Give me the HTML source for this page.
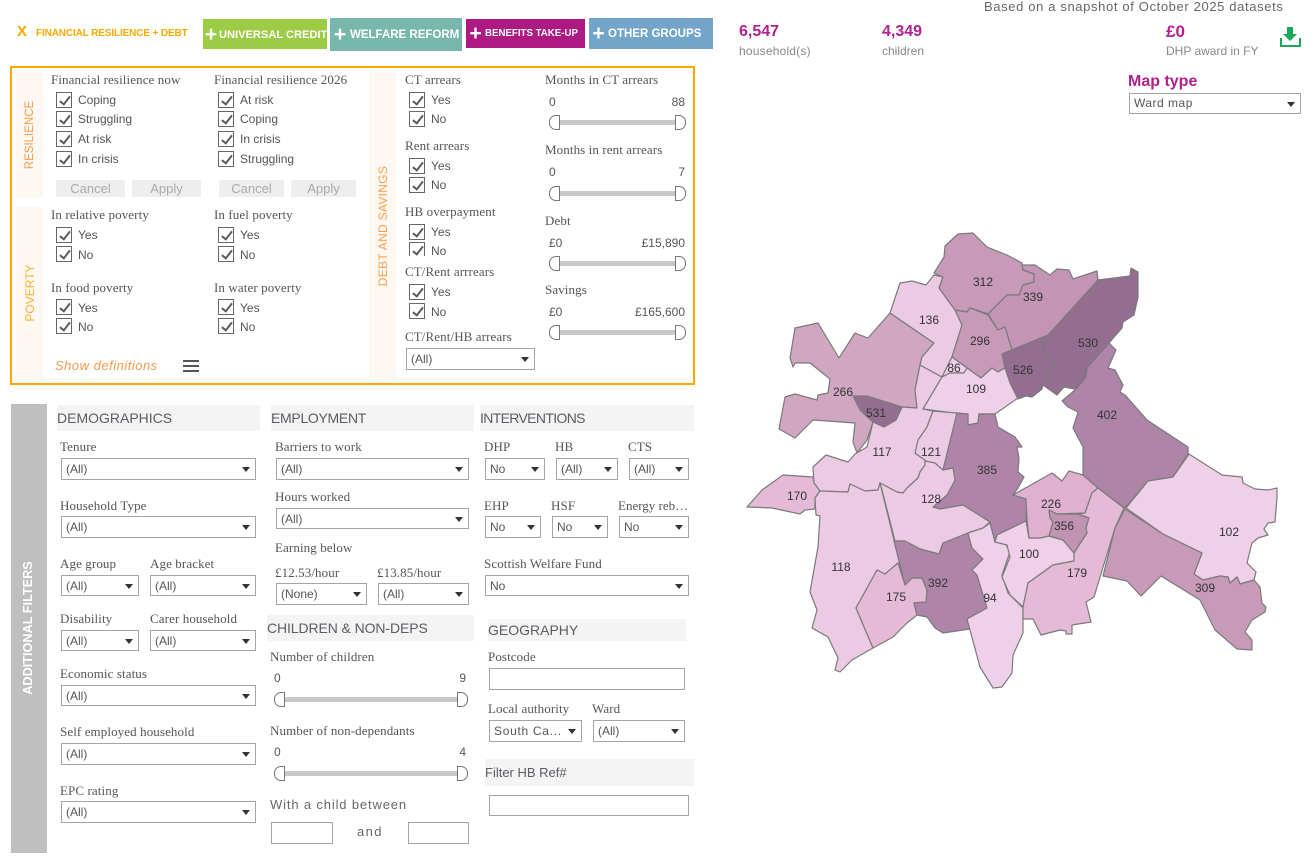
<!DOCTYPE html>
<html><head><meta charset="utf-8"><title>Dashboard</title>
<style>
html,body{margin:0;padding:0;background:#fff}
body{width:1315px;height:860px;position:relative;overflow:hidden;font-family:"Liberation Sans",sans-serif;color:#555;font-size:12px}
div,i,b{position:absolute;box-sizing:border-box;display:block;font-style:normal}
.t{white-space:nowrap;line-height:14px;font-size:12px;color:#555}
.l{white-space:nowrap;line-height:14px;font-family:"Liberation Serif",serif;font-size:13px;color:#555;letter-spacing:.1px}
.r{transform:translateX(-100%)}
.c{width:16px;height:16px;border:1px solid #666;background:#fff}
.c:after{content:"";position:absolute;left:5px;top:1px;width:4px;height:9px;border:solid #5a5a5a;border-width:0 2px 2px 0;transform:rotate(38deg)}
.s{height:22px;border:1px solid #a5a5a5;background:#fff;font-size:12px;line-height:20px;padding-left:4px;color:#555;white-space:nowrap;overflow:hidden}
.s:after{content:"";position:absolute;right:5px;top:8px;border:4px solid transparent;border-top:5px solid #333;border-bottom:0}
.n{height:22px;border:1px solid #a5a5a5;background:#fff}
.sl{height:15px;background:linear-gradient(#c8c8c8,#c8c8c8) center/100% 5px no-repeat}
.sl:before,.sl:after{content:"";position:absolute;top:0;width:11px;height:15px;border:1px solid #777;background:#fff;box-sizing:border-box}
.sl:before{left:0;border-radius:7px 0 0 7px}
.sl:after{right:0;border-radius:0 7px 7px 0}
.h{height:26px;background:#f4f4f4}
.g{font-size:14px;line-height:16px;white-space:nowrap;color:#5f5a64}
.btn{background:#eee;color:#aaa;height:17px;line-height:17px;text-align:center;font-size:13px;top:180px}
.tab{color:#fff;font-weight:bold;white-space:nowrap;display:flex;align-items:center}
.tab span{font-size:21px;line-height:20px;flex:none;text-align:center}
.st{background:#fdf8f2}
.v{white-space:nowrap;transform:translate(-50%,-50%) rotate(-90deg);line-height:14px}
svg{position:absolute;left:0;top:0}
polygon{stroke:#7a7a7a;stroke-width:1.2;stroke-linejoin:round}
svg text{font-family:"Liberation Sans",sans-serif;font-size:12px;fill:#333;text-anchor:middle}
</style></head><body>

<div style="left:17px;top:24px;font-size:15px;line-height:16px;font-weight:bold;color:#f9a800">X</div>
<div style="left:36px;top:27px;font-size:10px;line-height:14px;font-weight:bold;color:#f9a800;white-space:nowrap;letter-spacing:-.13px">FINANCIAL RESILIENCE + DEBT</div>
<div class="tab" style="left:203px;top:19px;width:124px;height:30px;background:#9ccb45;font-size:11.1px;padding-top:1px"><span style="width:16px">+</span>UNIVERSAL CREDIT</div>
<div class="tab" style="left:330px;top:18px;width:132px;height:33px;background:#78b7ac;font-size:11.5px"><span style="width:20px">+</span>WELFARE REFORM</div>
<div class="tab" style="left:466px;top:19px;width:119px;height:29px;background:#ae1a84;font-size:9.7px"><span style="width:19px">+</span>BENEFITS TAKE-UP</div>
<div class="tab" style="left:589px;top:18px;width:124px;height:31px;background:#72a5c9;font-size:11.5px"><span style="width:19px">+</span>OTHER GROUPS</div>

<div class="t" style="left:984px;top:0;font-size:13px;letter-spacing:.63px;color:#666">Based on a snapshot of October 2025 datasets</div>
<div class="t" style="left:739px;top:23px;font-size:16px;line-height:17px;font-weight:bold;color:#b3208f">6,547</div>
<div class="t" style="left:739px;top:44px;color:#888;letter-spacing:.2px">household(s)</div>
<div class="t" style="left:882px;top:23px;font-size:16px;line-height:17px;font-weight:bold;color:#b3208f">4,349</div>
<div class="t" style="left:882px;top:44px;color:#888">children</div>
<div class="t" style="left:1166px;top:23px;font-size:17px;line-height:17px;font-weight:bold;color:#b3208f">£0</div>
<div class="t" style="left:1166px;top:44px;color:#888">DHP award in FY</div>
<svg style="left:1279px;top:26px" width="23" height="22" viewBox="0 0 23 22"><path d="M8 1h6v7h4l-7 7-7-7h4z" fill="#1aa85a"/><path d="M2 12v8h19v-8" fill="none" stroke="#1aa85a" stroke-width="2"/></svg>
<div class="t" style="left:1128px;top:73px;font-size:16px;line-height:18px;font-weight:bold;color:#b01f8c">Map type</div>
<div class="s" style="left:1129px;top:93px;width:172px;height:21px;line-height:19px;letter-spacing:.5px">Ward map</div>

<!-- orange panel -->
<div style="left:10px;top:66px;width:685px;height:319px;border:2px solid #f9a800"></div>
<div class="st" style="left:16px;top:72px;width:27px;height:126px"></div>
<div class="st" style="left:16px;top:207px;width:27px;height:172px"></div>
<div class="st" style="left:369px;top:72px;width:27px;height:307px"></div>
<div class="t v" style="left:30px;top:135px;color:#f79a4a;font-size:11.5px">RESILIENCE</div>
<div class="t v" style="left:30px;top:293px;color:#f9b233">POVERTY</div>
<div class="t v" style="left:383px;top:226px;color:#f7a04f;letter-spacing:.3px">DEBT AND SAVINGS</div>

<div class="l" style="left:51px;top:73px">Financial resilience now</div>
<i class="c" style="left:56px;top:92px"></i><div class="t" style="left:78px;top:93px">Coping</div>
<i class="c" style="left:56px;top:111px"></i><div class="t" style="left:78px;top:112px">Struggling</div>
<i class="c" style="left:56px;top:131px"></i><div class="t" style="left:78px;top:132px">At risk</div>
<i class="c" style="left:56px;top:151px"></i><div class="t" style="left:78px;top:152px">In crisis</div>
<div class="l" style="left:214px;top:73px">Financial resilience 2026</div>
<i class="c" style="left:218px;top:92px"></i><div class="t" style="left:240px;top:93px">At risk</div>
<i class="c" style="left:218px;top:111px"></i><div class="t" style="left:240px;top:112px">Coping</div>
<i class="c" style="left:218px;top:131px"></i><div class="t" style="left:240px;top:132px">In crisis</div>
<i class="c" style="left:218px;top:151px"></i><div class="t" style="left:240px;top:152px">Struggling</div>
<div class="btn" style="left:56px;width:69px">Cancel</div>
<div class="btn" style="left:132px;width:69px">Apply</div>
<div class="btn" style="left:219px;width:65px">Cancel</div>
<div class="btn" style="left:291px;width:65px">Apply</div>

<div class="l" style="left:51px;top:208px">In relative poverty</div>
<i class="c" style="left:56px;top:227px"></i><div class="t" style="left:78px;top:228px">Yes</div>
<i class="c" style="left:56px;top:246px"></i><div class="t" style="left:78px;top:248px">No</div>
<div class="l" style="left:214px;top:208px">In fuel poverty</div>
<i class="c" style="left:218px;top:227px"></i><div class="t" style="left:240px;top:228px">Yes</div>
<i class="c" style="left:218px;top:246px"></i><div class="t" style="left:240px;top:248px">No</div>
<div class="l" style="left:51px;top:281px">In food poverty</div>
<i class="c" style="left:56px;top:299px"></i><div class="t" style="left:78px;top:301px">Yes</div>
<i class="c" style="left:56px;top:318px"></i><div class="t" style="left:78px;top:320px">No</div>
<div class="l" style="left:214px;top:281px">In water poverty</div>
<i class="c" style="left:218px;top:299px"></i><div class="t" style="left:240px;top:301px">Yes</div>
<i class="c" style="left:218px;top:318px"></i><div class="t" style="left:240px;top:320px">No</div>
<div class="t" style="left:55px;top:359px;font-size:13px;font-style:italic;color:#f79a4a;letter-spacing:.5px">Show definitions</div>
<div style="left:183px;top:360px;width:16px;height:2px;background:#555"></div>
<div style="left:183px;top:365px;width:16px;height:2px;background:#555"></div>
<div style="left:183px;top:370px;width:16px;height:2px;background:#555"></div>

<div class="l" style="left:405px;top:73px">CT arrears</div>
<i class="c" style="left:409px;top:92px"></i><div class="t" style="left:431px;top:93px">Yes</div>
<i class="c" style="left:409px;top:111px"></i><div class="t" style="left:431px;top:112px">No</div>
<div class="l" style="left:405px;top:139px">Rent arrears</div>
<i class="c" style="left:409px;top:158px"></i><div class="t" style="left:431px;top:159px">Yes</div>
<i class="c" style="left:409px;top:177px"></i><div class="t" style="left:431px;top:178px">No</div>
<div class="l" style="left:405px;top:205px">HB overpayment</div>
<i class="c" style="left:409px;top:224px"></i><div class="t" style="left:431px;top:225px">Yes</div>
<div style="left:405px;top:242px;width:60px;height:14px;overflow:hidden"><i class="c" style="left:4px;top:0"></i><div class="t" style="left:26px;top:2px">No</div></div>
<div class="l" style="left:405px;top:265px">CT/Rent arrrears</div>
<i class="c" style="left:409px;top:284px"></i><div class="t" style="left:431px;top:285px">Yes</div>
<i class="c" style="left:409px;top:303px"></i><div class="t" style="left:431px;top:305px">No</div>
<div class="l" style="left:405px;top:330px">CT/Rent/HB arrears</div>
<div class="s" style="left:406px;top:348px;width:129px">(All)</div>

<div class="l" style="left:545px;top:73px">Months in CT arrears</div>
<div class="t" style="left:549px;top:95px">0</div><div class="t r" style="left:685px;top:95px">88</div>
<div class="sl" style="left:549px;top:115px;width:137px"></div>
<div class="l" style="left:545px;top:143px">Months in rent arrears</div>
<div class="t" style="left:549px;top:165px">0</div><div class="t r" style="left:685px;top:165px">7</div>
<div class="sl" style="left:549px;top:186px;width:137px"></div>
<div class="l" style="left:545px;top:214px">Debt</div>
<div class="t" style="left:549px;top:236px">£0</div><div class="t r" style="left:685px;top:236px">£15,890</div>
<div class="sl" style="left:549px;top:256px;width:137px"></div>
<div class="l" style="left:545px;top:283px">Savings</div>
<div class="t" style="left:549px;top:305px">£0</div><div class="t r" style="left:685px;top:305px">£165,600</div>
<div class="sl" style="left:549px;top:325px;width:137px"></div>

<!-- additional filters -->
<div style="left:11px;top:404px;width:36px;height:449px;background:#bfbfbf"></div>
<div class="t v" style="left:28px;top:628px;color:#fff;font-weight:bold;font-size:12.7px">ADDITIONAL FILTERS</div>

<div class="h" style="left:57px;top:405px;width:203px"></div><div class="g" style="left:57px;top:410px">DEMOGRAPHICS</div>
<div class="h" style="left:271px;top:405px;width:203px"></div><div class="g" style="left:271px;top:410px;letter-spacing:-.3px">EMPLOYMENT</div>
<div class="h" style="left:480px;top:405px;width:214px"></div><div class="g" style="left:480px;top:410px;letter-spacing:-.65px">INTERVENTIONS</div>
<div class="h" style="left:267px;top:615px;width:207px"></div><div class="g" style="left:267px;top:620px;letter-spacing:-.1px">CHILDREN &amp; NON-DEPS</div>
<div class="h" style="left:488px;top:619px;width:198px;height:22px"></div><div class="g" style="left:488px;top:622px">GEOGRAPHY</div>
<div class="h" style="left:485px;top:759px;width:209px;height:27px"></div><div class="g" style="left:485px;top:765px;font-size:13px">Filter HB Ref#</div>

<div class="l" style="left:60px;top:440px">Tenure</div><div class="s" style="left:61px;top:458px;width:195px">(All)</div>
<div class="l" style="left:60px;top:499px">Household Type</div><div class="s" style="left:61px;top:516px;width:195px">(All)</div>
<div class="l" style="left:60px;top:557px">Age group</div><div class="s" style="left:61px;top:575px;width:78px;height:21px">(All)</div>
<div class="l" style="left:150px;top:557px">Age bracket</div><div class="s" style="left:150px;top:575px;width:106px;height:21px">(All)</div>
<div class="l" style="left:60px;top:612px">Disability</div><div class="s" style="left:61px;top:630px;width:78px;height:21px">(All)</div>
<div class="l" style="left:150px;top:612px">Carer household</div><div class="s" style="left:150px;top:630px;width:106px;height:21px">(All)</div>
<div class="l" style="left:60px;top:667px">Economic status</div><div class="s" style="left:61px;top:685px;width:195px;height:21px">(All)</div>
<div class="l" style="left:60px;top:725px">Self employed household</div><div class="s" style="left:61px;top:743px;width:195px">(All)</div>
<div class="l" style="left:60px;top:784px">EPC rating</div><div class="s" style="left:61px;top:801px;width:195px">(All)</div>

<div class="l" style="left:275px;top:440px">Barriers to work</div><div class="s" style="left:276px;top:458px;width:193px">(All)</div>
<div class="l" style="left:275px;top:490px">Hours worked</div><div class="s" style="left:276px;top:508px;width:193px;height:21px">(All)</div>
<div class="l" style="left:275px;top:541px">Earning below</div>
<div class="l" style="left:275px;top:566px">£12.53/hour</div><div class="s" style="left:276px;top:583px;width:91px">(None)</div>
<div class="l" style="left:377px;top:566px">£13.85/hour</div><div class="s" style="left:378px;top:583px;width:91px">(All)</div>

<div class="l" style="left:270px;top:650px">Number of children</div>
<div class="t" style="left:274px;top:671px">0</div><div class="t r" style="left:466px;top:671px">9</div>
<div class="sl" style="left:274px;top:692px;width:194px"></div>
<div class="l" style="left:270px;top:724px">Number of non-dependants</div>
<div class="t" style="left:274px;top:745px">0</div><div class="t r" style="left:466px;top:745px">4</div>
<div class="sl" style="left:274px;top:766px;width:194px"></div>
<div class="t" style="left:270px;top:798px;font-size:13px;letter-spacing:.85px;color:#666">With a child between</div>
<div class="n" style="left:271px;top:822px;width:62px"></div>
<div class="t" style="left:357px;top:825px;font-size:13px;letter-spacing:1.4px;color:#666">and</div>
<div class="n" style="left:408px;top:822px;width:61px"></div>

<div class="l" style="left:484px;top:440px">DHP</div><div class="s" style="left:485px;top:458px;width:60px">No</div>
<div class="l" style="left:555px;top:440px">HB</div><div class="s" style="left:556px;top:458px;width:62px">(All)</div>
<div class="l" style="left:628px;top:440px">CTS</div><div class="s" style="left:629px;top:458px;width:60px">(All)</div>
<div class="l" style="left:484px;top:499px">EHP</div><div class="s" style="left:485px;top:516px;width:56px">No</div>
<div class="l" style="left:551px;top:499px">HSF</div><div class="s" style="left:552px;top:516px;width:56px">No</div>
<div class="l" style="left:618px;top:499px;letter-spacing:0">Energy reb…</div><div class="s" style="left:619px;top:516px;width:70px">No</div>
<div class="l" style="left:484px;top:557px">Scottish Welfare Fund</div><div class="s" style="left:485px;top:575px;width:204px;height:21px">No</div>

<div class="l" style="left:488px;top:650px">Postcode</div><div class="n" style="left:489px;top:668px;width:196px"></div>
<div class="l" style="left:488px;top:702px">Local authority</div><div class="s" style="left:489px;top:720px;width:93px;letter-spacing:.7px">South Ca...</div>
<div class="l" style="left:592px;top:702px">Ward</div><div class="s" style="left:593px;top:720px;width:92px">(All)</div>
<div class="n" style="left:489px;top:795px;width:200px;height:21px"></div>

<!-- map -->
<svg width="1315" height="860" viewBox="0 0 1315 860" style="pointer-events:none">
<polygon fill="#d0a6c0" points="890,313 934,343 922,357 920,365 915,390 917,408 902,407 853,396 873,422 867,440 857,453 853,442 855,423 813,420 795,438 779,429 785,397 795,394 817,400 818,395 828,393 830,379 810,363 795,363 793,367 790,358 795,328 818,323 839,358 855,333 868,338"/>
<polygon fill="#eccae3" points="920,365 942,377 923,409 933,411 927,427 915,453 925,460 925,465 920,472 918,478 907,488 903,493 897,492 880,483 878,490 865,491 850,484 848,492 820,491 814,483 813,467 826,455 848,462 855,454 867,447 873,422 884,427 896,420 902,407 917,408 915,390"/>
<polygon fill="#936e91" points="853,396 867,396 902,407 896,420 884,427 873,422 860,410"/>
<polygon fill="#eccae3" points="943,277 939,288 955,310 962,325 952,357 942,377 920,365 922,357 934,343 890,313 900,283 912,281 926,285 934,275"/>
<polygon fill="#c79ab8" points="934,273 944,257 945,246 958,234 973,233 987,247 1007,255 1022,263 1023,270 1034,274 1034,282 1023,285 1019,295 1007,295 988,314 970,308 967,312 955,310 939,288 943,277"/>
<polygon fill="#c394b4" points="1022,265 1035,265 1050,275 1057,269 1069,270 1073,279 1097,271 1098,280 1088,295 1048,335 1012,350 1005,327 998,330 988,314 1007,295 1019,295 1023,285 1034,282 1034,274 1023,270"/>
<polygon fill="#c79ab8" points="955,310 967,312 970,308 988,315 998,330 1005,327 1012,350 1002,354 1005,368 998,372 992,368 981,378 967,368 952,357 962,325"/>
<polygon fill="#f0cfe9" points="952,357 967,368 964,373 950,373 942,377"/>
<polygon fill="#f0cfe9" points="942,377 923,409 953,413 968,414 968,425 978,423 979,414 995,414 1018,398 1011,383 1005,368 998,372 992,368 981,378 967,368 964,373 950,373"/>
<polygon fill="#936e91" points="1098,280 1130,276 1131,268 1138,272 1138,297 1134,315 1123,322 1122,328 1109,343 1087,368 1086,377 1075,389 1064,387 1057,395 1043,385 1055,364 1043,348 1048,335"/>
<polygon fill="#936e91" points="1002,354 1048,335 1043,348 1055,364 1043,385 1042,389 1032,397 1026,396 1018,399 1010,383 1005,368"/>
<polygon fill="#ae85a9" points="1109,343 1116,350 1108,368 1115,370 1123,385 1120,392 1125,395 1147,420 1188,447 1188,454 1173,477 1148,481 1125,508 1097,488 1083,475 1083,447 1073,428 1078,412 1068,407 1062,401 1075,390 1086,377 1087,368"/>
<polygon fill="#eccae3" points="933,411 957,413 943,470 937,468 926,461 915,453 918,440 927,427"/>
<polygon fill="#ae85a9" points="957,413 968,414 968,425 978,423 979,414 995,414 998,427 1015,437 1022,447 1017,447 1019,458 1018,472 1024,477 1018,488 1013,495 1027,499 1026,521 997,535 995,542 990,522 963,505 940,509 933,507 947,495 955,480 953,468 943,470"/>
<polygon fill="#eccae3" points="925,461 935,463 943,470 953,468 955,480 947,495 933,507 940,509 963,505 990,522 983,528 968,533 943,543 939,554 920,549 905,541 895,541 882,490 880,483 897,492 903,493 907,488 918,478 920,472 925,465"/>
<polygon fill="#e4bad6" points="747,507 762,490 783,475 813,477 814,483 820,491 815,498 815,509 805,510 800,514 772,508"/>
<polygon fill="#eccae3" points="820,491 848,492 850,484 865,491 878,490 880,483 905,585 898,563 885,574 877,570 856,608 873,648 852,660 840,672 835,670 838,658 828,637 812,628 817,610 810,592 818,547 820,516 816,515 815,498"/>
<polygon fill="#e4bad6" points="898,563 905,585 912,578 922,578 927,590 926,602 914,603 917,615 907,623 893,637 873,648 856,608 877,570 885,574"/>
<polygon fill="#ae85a9" points="894,541 905,541 920,549 939,554 943,543 968,533 972,548 983,559 972,570 977,575 987,608 967,619 970,629 943,633 935,628 927,617 917,615 914,603 926,602 927,590 922,578 912,578 905,585"/>
<polygon fill="#f0cfe9" points="990,523 995,542 1005,543 1010,552 1002,575 1008,593 1023,608 1023,633 1013,655 1012,673 1002,687 993,688 980,667 967,619 987,608 977,575 972,570 983,559 972,548 968,533 983,528"/>
<polygon fill="#f0cfe9" points="995,542 997,535 1026,521 1029,538 1040,538 1049,536 1063,540 1074,553 1074,561 1053,565 1028,583 1023,607 1010,595 1002,577 1010,557 1007,545"/>
<polygon fill="#dfb0cf" points="1013,495 1052,473 1062,481 1069,471 1083,475 1098,488 1092,493 1085,513 1057,514 1049,510 1050,518 1053,522 1049,536 1040,538 1029,538 1027,520 1026,499"/>
<polygon fill="#c093b2" points="1049,510 1057,514 1078,514 1089,518 1086,528 1087,533 1074,553 1063,540 1049,536 1053,522 1050,518"/>
<polygon fill="#e4bad6" points="1098,488 1124,508 1115,528 1094,597 1086,602 1091,622 1072,625 1072,634 1066,634 1066,631 1060,630 1041,635 1033,619 1023,619 1023,607 1028,583 1053,565 1074,561 1074,553 1087,533 1086,528 1089,518 1078,514 1085,513 1092,493"/>
<polygon fill="#f0cfe9" points="1189,454 1222,475 1242,477 1243,483 1255,489 1268,490 1277,488 1277,497 1275,522 1268,523 1264,529 1268,535 1258,538 1252,543 1247,563 1256,572 1254,580 1240,584 1237,577 1230,583 1228,577 1220,576 1203,580 1194,574 1202,553 1163,534 1126,508 1148,481 1173,477"/>
<polygon fill="#c79ab8" points="1125,509 1163,534 1202,553 1194,574 1203,580 1220,576 1228,577 1230,583 1237,577 1240,584 1254,580 1260,587 1262,603 1266,607 1265,612 1252,620 1245,632 1252,640 1252,650 1237,649 1215,630 1200,600 1161,576 1141,596 1127,581 1103,576 1115,528"/>
<text x="983" y="286">312</text><text x="1033" y="301">339</text><text x="929" y="324">136</text><text x="980" y="345">296</text>
<text x="1088" y="347">530</text><text x="1023" y="374">526</text><text x="954" y="372">86</text><text x="976" y="393">109</text>
<text x="843" y="396">266</text><text x="876" y="417">531</text><text x="1107" y="419">402</text><text x="882" y="456">117</text>
<text x="931" y="456">121</text><text x="987" y="474">385</text><text x="797" y="500">170</text><text x="931" y="503">128</text>
<text x="1051" y="508">226</text><text x="1064" y="530">356</text><text x="1229" y="536">102</text><text x="1029" y="558">100</text>
<text x="841" y="571">118</text><text x="938" y="587">392</text><text x="1077" y="577">179</text><text x="1205" y="592">309</text>
<text x="896" y="601">175</text><text x="990" y="602">94</text>
</svg>
</body></html>
